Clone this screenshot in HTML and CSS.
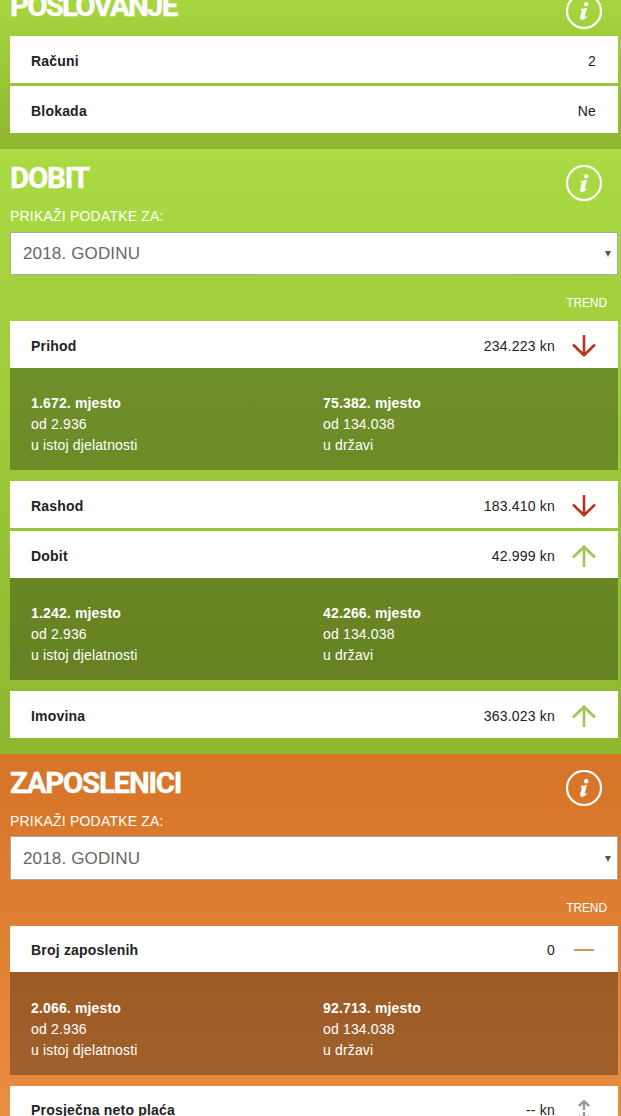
FILE: index.html
```html
<!DOCTYPE html>
<html lang="hr">
<head>
  <meta charset="UTF-8">
  <meta name="viewport" content="width=device-width, initial-scale=1.0">
  <title>Poslovanje</title>
  <link rel="stylesheet" href="styles.css">
</head>
<body>
  <!-- Shared icons -->
  <svg class="sprite">
    <symbol id="info" viewBox="0 0 36 36">
      <circle cx="18" cy="18" r="17" fill="none" stroke="currentColor" stroke-width="2.2"/>
      <circle cx="20.2" cy="11.2" r="2.2" fill="currentColor"/>
      <path d="M14.8 16 Q18 15.7 21 14.7 L18.8 23.4 Q18.6 24.7 19.5 24 L20.6 23 L21.2 23.6 Q18.7 27 16.1 27 Q13.6 26.8 14.2 24 L15.8 17.9 Q15.9 17.1 14.6 17.1 Z" fill="currentColor"/>
    </symbol>
    <symbol id="arrow-down" viewBox="0 0 24 24">
      <path d="M12 1 V22 M1 10.5 L12 21.3 L23 10.5" fill="none" stroke="currentColor" stroke-width="2.6" stroke-linejoin="round"/>
    </symbol>
    <symbol id="arrow-up" viewBox="0 0 24 24">
      <path d="M12 23 V2 M1 13.5 L12 2.7 L23 13.5" fill="none" stroke="currentColor" stroke-width="2.6" stroke-linejoin="round"/>
    </symbol>
  </svg>

  <main class="page">
    <!-- Poslovanje -->
    <section class="card card-green card-short">
      <header class="card-head">
        <h2 class="card-title title-poslovanje">POSLOVANJE</h2>
        <svg class="info"><use href="#info"/></svg>
      </header>
      <div class="row"><b>Računi</b><span class="plain-value">2</span></div>
      <div class="row"><b>Blokada</b><span class="plain-value">Ne</span></div>
    </section>

    <!-- Dobit -->
    <section class="card card-green">
      <header class="card-head">
        <h2 class="card-title title-dobit">DOBIT</h2>
        <svg class="info"><use href="#info"/></svg>
      </header>
      <p class="label">PRIKAŽI PODATKE ZA:</p>
      <div class="select"><span>2018. GODINU</span><i class="caret"></i></div>
      <p class="trend-label">TREND</p>

      <div class="row"><b>Prihod</b><span class="value">234.223 kn</span><svg class="trend down"><use href="#arrow-down"/></svg></div>
      <div class="rank">
        <p><b>1.672. mjesto</b><br>od 2.936<br>u istoj djelatnosti</p>
        <p><b>75.382. mjesto</b><br>od 134.038<br>u državi</p>
      </div>
      <div class="row"><b>Rashod</b><span class="value">183.410 kn</span><svg class="trend down"><use href="#arrow-down"/></svg></div>
      <div class="row"><b>Dobit</b><span class="value">42.999 kn</span><svg class="trend up"><use href="#arrow-up"/></svg></div>
      <div class="rank">
        <p><b>1.242. mjesto</b><br>od 2.936<br>u istoj djelatnosti</p>
        <p><b>42.266. mjesto</b><br>od 134.038<br>u državi</p>
      </div>
      <div class="row"><b>Imovina</b><span class="value">363.023 kn</span><svg class="trend up"><use href="#arrow-up"/></svg></div>
    </section>

    <!-- Zaposlenici -->
    <section class="card card-orange">
      <header class="card-head">
        <h2 class="card-title title-zaposlenici">ZAPOSLENICI</h2>
        <svg class="info"><use href="#info"/></svg>
      </header>
      <p class="label">PRIKAŽI PODATKE ZA:</p>
      <div class="select"><span>2018. GODINU</span><i class="caret"></i></div>
      <p class="trend-label">TREND</p>

      <div class="row"><b>Broj zaposlenih</b><span class="value">0</span><svg class="trend same" viewBox="0 0 24 24"><path d="M2 12 H22" stroke="currentColor" stroke-width="2"/></svg></div>
      <div class="rank">
        <p><b>2.066. mjesto</b><br>od 2.936<br>u istoj djelatnosti</p>
        <p><b>92.713. mjesto</b><br>od 134.038<br>u državi</p>
      </div>
      <div class="row"><b>Prosječna neto plaća</b><span class="value">-- kn</span><svg class="trend none" viewBox="0 0 24 24"><path d="M12 3 V12 M6.8 8 L12 3.2 L17.2 8 M12 14 V23 M6.8 18 L12 22.8 L17.2 18" fill="none" stroke="currentColor" stroke-width="2.4"/></svg></div>
    </section>
  </main>
</body>
</html>
```

FILE: styles.css
```css
* {
  box-sizing: border-box;
}

body {
  margin: 0;
  height: 1116px;
  overflow: hidden;
  font-family: "Liberation Sans", Arial, sans-serif;
  font-size: 14px;
  letter-spacing: 0.2px;
  color: #222;
}

p, h2 {
  margin: 0;
}

.sprite {
  display: none;
}

/* The page is scrolled a little way into the first card */
.page {
  margin-top: -23px;
}

/* Cards */
.card {
  padding: 16px 3px 16px 10px;
  color: #fff;
}

.card-green {
  background: linear-gradient(#aadb43, #8fb62f);
}

.card-orange {
  height: 362px;
  padding-bottom: 0;
  background: linear-gradient(#d67427, #e88d42);
}

.card-head {
  display: flex;
  justify-content: space-between;
  height: 43px;
  padding-right: 16px;
}

.card-title {
  font-family: Roboto, sans-serif;
  font-size: 29.5px;
  font-weight: 700;
  line-height: 27px;
  -webkit-text-stroke: 0.4px #fff;
}

.title-poslovanje {
  letter-spacing: -1.8px;
}

.title-dobit {
  letter-spacing: -1.2px;
}

.title-zaposlenici {
  letter-spacing: -1.3px;
}

.info {
  width: 36px;
  height: 36px;
}

/* Year picker */
.label {
  height: 24px;
  line-height: 16px;
}

.select {
  display: flex;
  align-items: center;
  justify-content: space-between;
  height: 43px;
  padding: 0 6px 0 12px;
  border: 1px solid #a9a9a9;
  background: #fff;
  color: #666;
  font-size: 17px;
  letter-spacing: 0.15px;
}

.caret {
  border: 3px solid transparent;
  border-top: 6px solid #555;
  border-bottom: 0;
}

.trend-label {
  height: 46px;
  padding: 20px 11px 0 0;
  font-size: 12px;
  line-height: 16px;
  text-align: right;
  letter-spacing: -0.1px;
}

/* Rows */
.row {
  display: flex;
  align-items: center;
  height: 47px;
  padding: 3px 22px 0 21px;
  background: #fff;
  color: #222;
}

.row + .row {
  margin-top: 3px;
}

.value,
.plain-value {
  margin-left: auto;
}

.trend {
  width: 24px;
  height: 24px;
  margin-left: 17px;
}

.down {
  color: #b8351c;
}

.up {
  color: #9fc554;
}

.same {
  color: #d19a52;
}

.none {
  color: #999;
}

/* Rank block */
.rank {
  display: grid;
  grid-template-columns: 292px 1fr;
  height: 102px;
  margin-bottom: 11px;
  padding: 25px 0 0 21px;
  background: rgba(0, 0, 0, 0.3);
  line-height: 21px;
  letter-spacing: 0.16px;
}

/* Zaposlenici runs on slightly different row heights */
.card-orange .label {
  height: 23px;
}

.card-orange .select {
  height: 44px;
  padding-top: 1px;
}

.card-orange .row {
  height: 46px;
  padding-top: 2px;
}

.card-orange .rank {
  height: 103px;
  padding-top: 26px;
}
```
